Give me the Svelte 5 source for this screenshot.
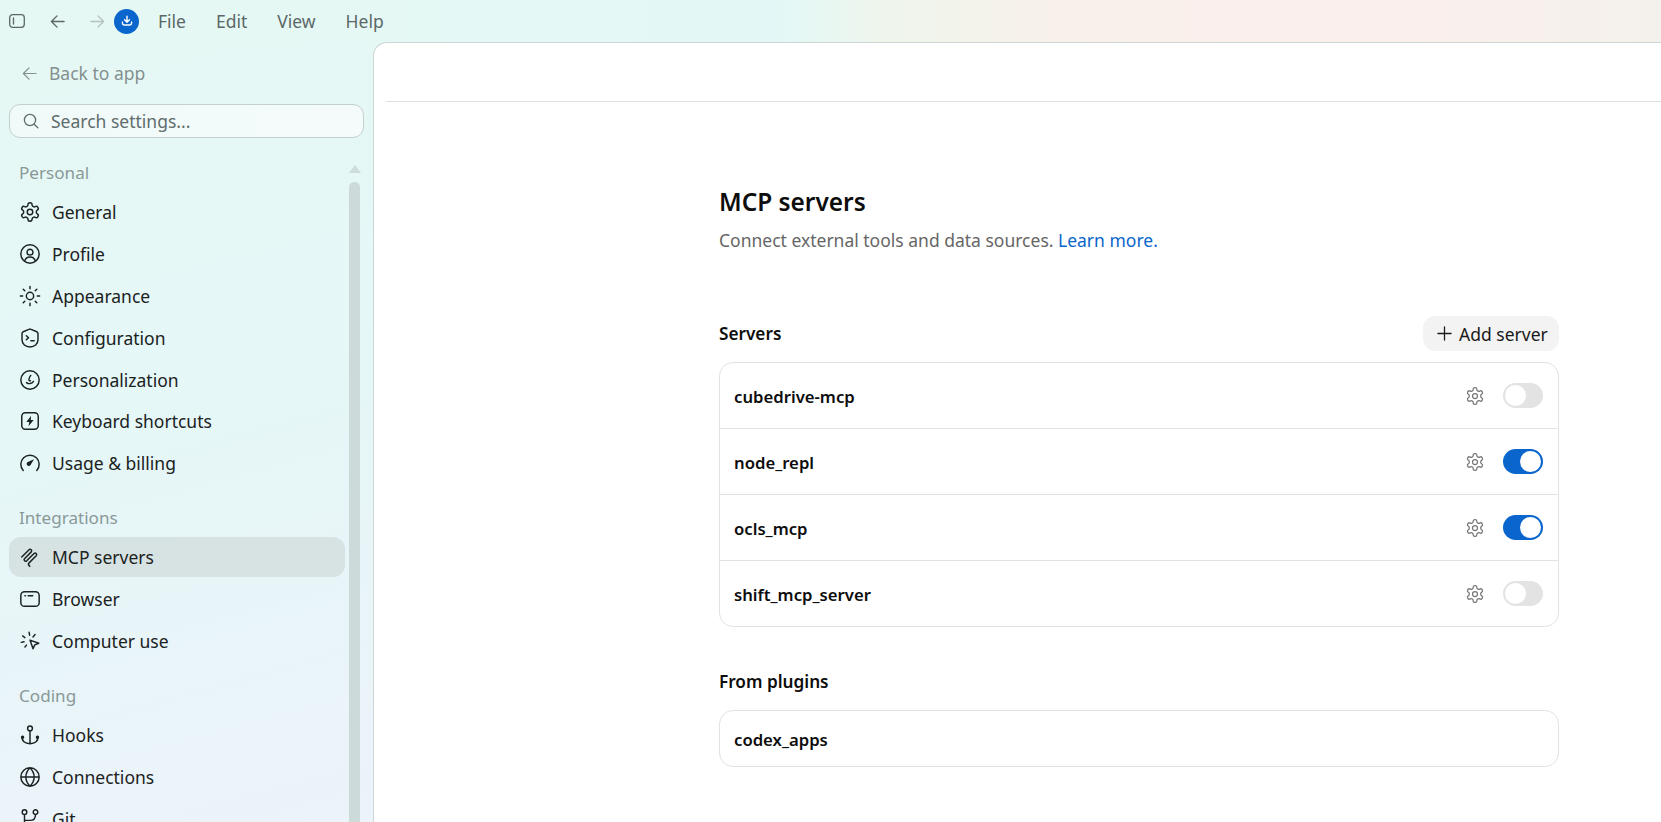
<script lang="ts">
  const gear =
    'M12.22 2h-.44a2 2 0 0 0-2 2v.18a2 2 0 0 1-1 1.73l-.43.25a2 2 0 0 1-2 0l-.15-.08a2 2 0 0 0-2.73.73l-.22.38a2 2 0 0 0 .73 2.73l.15.1a2 2 0 0 1 1 1.72v.51a2 2 0 0 1-1 1.74l-.15.09a2 2 0 0 0-.73 2.73l.22.38a2 2 0 0 0 2.73.73l.15-.08a2 2 0 0 1 2 0l.43.25a2 2 0 0 1 1 1.73V20a2 2 0 0 0 2 2h.44a2 2 0 0 0 2-2v-.18a2 2 0 0 1 1-1.73l.43-.25a2 2 0 0 1 2 0l.15.08a2 2 0 0 0 2.73-.73l.22-.39a2 2 0 0 0-.73-2.73l-.15-.08a2 2 0 0 1-1-1.74v-.5a2 2 0 0 1 1-1.74l.15-.09a2 2 0 0 0 .73-2.73l-.22-.38a2 2 0 0 0-2.73-.73l-.15.08a2 2 0 0 1-2 0l-.43-.25a2 2 0 0 1-1-1.73V4a2 2 0 0 0-2-2zM9 12a3 3 0 1 0 6 0a3 3 0 1 0-6 0';

  // stroke paths, then optional filled paths
  const icons: Record<string, { d: string; fill?: string }> = {
    general: { d: gear },
    profile: { d: 'M2 12a10 10 0 1 0 20 0a10 10 0 1 0-20 0M8.8 10a3.2 3.2 0 1 0 6.4 0a3.2 3.2 0 1 0-6.4 0M6.2 19.4c1-2.9 3.2-4.2 5.8-4.2s4.8 1.3 5.8 4.2' },
    appearance: { d: 'M8 12a4 4 0 1 0 8 0a4 4 0 1 0-8 0M12 1.5v2.5M12 20v2.5M1.5 12H4M20 12h2.5M4.6 4.6l1.7 1.7M17.7 17.7l1.7 1.7M4.6 19.4l1.7-1.7M17.7 6.3l1.7-1.7' },
    configuration: { d: 'M10.8 2.6 4.6 5.2a2 2 0 0 0-1.3 1.9V14c0 4.6 3.8 7.7 8.7 7.7s8.7-3.1 8.7-7.7V7.1a2 2 0 0 0-1.3-1.9l-6.2-2.6a2.6 2.6 0 0 0-2.4 0zM8 9.5l2.4 2.2L8 14M13 15h3.6' },
    personalization: { d: 'M2 12a10 10 0 1 0 20 0a10 10 0 1 0-20 0M12.8 7c-1.2 1.6-2 3.2-2 4.6 0 .9.7 1.3 1.6 1.2M8.2 14.8c2.2 1.8 5.8 1.5 7.6-1.2' },
    keyboard: { d: 'M7 3h10a4 4 0 0 1 4 4v10a4 4 0 0 1-4 4H7a4 4 0 0 1-4-4V7a4 4 0 0 1 4-4z', fill: 'M13.2 6.4 8 13.2h3.2l-.8 4.4 5.6-6.8h-3.2z' },
    usage: { d: 'M4.6 20.2a10 10 0 1 1 14.8 0', fill: 'M16.4 7.8 9.6 10.9a2.3 2.3 0 1 0 3 3.3z' },
    mcp: { d: 'M3 12 11 4a1.7 1.7 0 0 1 2.4 2.4L6 13.8a1.7 1.7 0 0 0 2.4 2.4L16.4 8.2a1.7 1.7 0 0 1 2.4 2.4L11 18.4c-1 1-1 2 0 3l.8.8' },
    browser: { d: 'M6 4h12a4 4 0 0 1 4 4v8a4 4 0 0 1-4 4H6a4 4 0 0 1-4-4V8a4 4 0 0 1 4-4zM6.5 8.5h.6M10 8.5h5' },
    computer: { d: 'M11 2.5l.6 3.2M4 6.5l2.4 1.8M2.5 13.5l3-.6M6.5 18.5l1.6-2M17.5 5l-2.2 2.6M12 11l9.5 3.4-4.3 1.8-1.9 4.3z' },
    hooks: {
      d: 'M9.4 4.8a2.6 2.6 0 1 0 5.2 0a2.6 2.6 0 1 0-5.2 0M12 7.4v14M3.6 13.5c-1 5 3 8 8.4 8s9.4-3 8.4-8',
      fill: 'M2 14.5a1.9 1.9 0 1 0 3.8 0a1.9 1.9 0 1 0-3.8 0M18.2 14.5a1.9 1.9 0 1 0 3.8 0a1.9 1.9 0 1 0-3.8 0'
    },
    connections: { d: 'M2 12a10 10 0 1 0 20 0a10 10 0 1 0-20 0M2 12h20M12 2c-6 6-6 14 0 20c6-6 6-14 0-20' },
    git: { d: 'M3.5 4.5a2.5 2.5 0 1 0 5 0a2.5 2.5 0 1 0-5 0M15.5 4.5a2.5 2.5 0 1 0 5 0a2.5 2.5 0 1 0-5 0M3.5 20.5a2.5 2.5 0 1 0 5 0a2.5 2.5 0 1 0-5 0M6 7v11M18 7c0 5-3 6.5-6 6.5H6' }
  };

  const groups = [
    {
      label: 'Personal',
      items: [
        ['general', 'General'],
        ['profile', 'Profile'],
        ['appearance', 'Appearance'],
        ['configuration', 'Configuration'],
        ['personalization', 'Personalization'],
        ['keyboard', 'Keyboard shortcuts'],
        ['usage', 'Usage & billing']
      ]
    },
    {
      label: 'Integrations',
      items: [
        ['mcp', 'MCP servers'],
        ['browser', 'Browser'],
        ['computer', 'Computer use']
      ]
    },
    {
      label: 'Coding',
      items: [
        ['hooks', 'Hooks'],
        ['connections', 'Connections'],
        ['git', 'Git']
      ]
    }
  ];

  let servers = $state([
    { name: 'cubedrive-mcp', on: false },
    { name: 'node_repl', on: true },
    { name: 'ocls_mcp', on: true },
    { name: 'shift_mcp_server', on: false }
  ]);
</script>

{#snippet icon(name: string)}
  <svg class="nav__icon" viewBox="0 0 24 24" aria-hidden="true">
    <path d={icons[name].d} />
    {#if icons[name].fill}
      <path class="solid" d={icons[name].fill} />
    {/if}
  </svg>
{/snippet}

<div class="app">
  <header class="titlebar">
    <svg class="tb-side" viewBox="0 0 16 14" aria-hidden="true">
      <rect x="0.7" y="0.7" width="14.6" height="12.6" rx="3" />
      <path d="M4.5 4v6" />
    </svg>
    <svg class="tb-arrow" viewBox="0 0 16 16" aria-hidden="true">
      <path d="M15 8H1.5M7.5 2 1.5 8l6 6" />
    </svg>
    <svg class="tb-arrow tb-arrow--off" viewBox="0 0 16 16" aria-hidden="true">
      <path d="M1 8h13.5M8.5 2l6 6-6 6" />
    </svg>
    <span class="tb-update">
      <svg viewBox="0 0 16 16" aria-hidden="true">
        <path d="M8 2.5v6.5M5.2 6.6 8 9.3l2.8-2.7M2.8 9v1.6a2 2 0 0 0 2 2h6.4a2 2 0 0 0 2-2V9" />
      </svg>
    </span>
    <nav class="menu">
      <span>File</span>
      <span>Edit</span>
      <span>View</span>
      <span>Help</span>
    </nav>
  </header>

  <div class="body">
    <aside class="sidebar">
      <div class="sidebar__scroll">
        <div class="back">
          <svg viewBox="0 0 16 16" aria-hidden="true">
            <path d="M15 8H1.5M7.5 2 1.5 8l6 6" />
          </svg>
          Back to app
        </div>

        <div class="search">
          <svg viewBox="0 0 16 16" aria-hidden="true">
            <circle cx="7" cy="7" r="5.6" />
            <path d="m11.2 11.2 3.6 3.6" />
          </svg>
          Search settings...
        </div>

        <div class="nav">
          {#each groups as group}
            <h2 class="nav__label">{group.label}</h2>
            <ul class="nav__list">
              {#each group.items as [name, label]}
                <li class="nav__item" class:nav__item--active={name === 'mcp'}>
                  {@render icon(name)}
                  {label}
                </li>
              {/each}
            </ul>
          {/each}
        </div>
      </div>

      <div class="scrollbar">
        <span class="scrollbar__arrow"></span>
        <span class="scrollbar__thumb"></span>
      </div>
    </aside>

    <main class="panel">
      <div class="panel__head"></div>
      <section class="page">
        <h1 class="page__title">MCP servers</h1>
        <p class="page__sub">
          Connect external tools and data sources. <span class="link">Learn more.</span>
        </p>

        <div class="section-head">
          <h2>Servers</h2>
          <button type="button" class="add">
            <svg viewBox="0 0 16 16" aria-hidden="true"><path d="M8 1v14M1 8h14" /></svg>
            Add server
          </button>
        </div>

        <div class="card">
          {#each servers as server}
            <div class="row">
              <span class="row__name">{server.name}</span>
              <svg class="row__gear" viewBox="0 0 24 24" aria-hidden="true"><path d={gear} /></svg>
              <button
                type="button"
                class="toggle"
                class:toggle--on={server.on}
                aria-label={server.name}
                onclick={() => (server.on = !server.on)}
              ></button>
            </div>
          {/each}
        </div>

        <h2 class="plugins">From plugins</h2>
        <div class="card">
          <div class="row row--plugin">
            <span class="row__name">codex_apps</span>
          </div>
        </div>
      </section>
    </main>
  </div>
</div>

<style>
  :global(body) {
    margin: 0;
    overflow: hidden;
  }

  .app {
    display: flex;
    flex-direction: column;
    height: 100vh;
    overflow: hidden;
    font-family: 'Noto Sans', 'Open Sans', sans-serif;
    font-size: 17.5px;
    background: #e6f8f4;
  }

  svg {
    fill: none;
    stroke: currentColor;
    stroke-linecap: round;
    stroke-linejoin: round;
    flex: none;
  }

  .titlebar {
    display: flex;
    align-items: center;
    flex: none;
    height: 42px;
    box-sizing: border-box;
    padding-left: 9px;
    color: #5c6868;
    background: linear-gradient(
      to right,
      #e6f8f3 0,
      #e3f8f6 780px,
      #eff5ec 890px,
      #f8f1e9 1060px,
      #faefec 1220px,
      #faefed 1420px,
      #f4f1ec 1661px
    );
  }

  .tb-side {
    width: 16px;
    height: 14px;
    stroke-width: 1.3;
  }

  .tb-arrow {
    width: 15px;
    height: 15px;
    margin-left: 25px;
    stroke-width: 1.5;
  }

  .tb-arrow--off {
    color: #b3c2c0;
  }

  .tb-update {
    display: flex;
    align-items: center;
    justify-content: center;
    width: 25px;
    height: 25px;
    margin-left: 9px;
    border-radius: 50%;
    background: #0a66cc;
    color: #fff;
  }

  .tb-update svg {
    width: 14px;
    height: 14px;
    stroke-width: 1.6;
  }

  .menu {
    display: flex;
    gap: 30px;
    margin-left: 19px;
  }

  .body {
    display: flex;
    flex: 1;
    min-height: 0;
  }

  .sidebar {
    display: flex;
    flex: none;
    width: 373px;
    overflow: hidden;
    background: linear-gradient(165deg, #e6f8f4 0, #e5f7f7 45%, #ecf3fa 100%);
  }

  .sidebar__scroll {
    width: 355px;
    flex: none;
    box-sizing: border-box;
    padding-left: 9px;
  }

  .back {
    display: flex;
    align-items: center;
    gap: 12px;
    height: 40px;
    margin: 11px 0;
    padding-left: 13px;
    color: #83908f;
  }

  .back svg {
    width: 15px;
    height: 15px;
    stroke-width: 1.3;
  }

  .search {
    display: flex;
    align-items: center;
    gap: 12px;
    width: 355px;
    height: 34px;
    box-sizing: border-box;
    padding-left: 13px;
    border: 1px solid #c3d0d0;
    border-radius: 11px;
    background: linear-gradient(to right, #f0faf9, #f5fbfb);
    color: #5f6c6c;
  }

  .search svg {
    width: 16px;
    height: 16px;
    stroke-width: 1.3;
  }

  .nav {
    width: 336px;
  }

  .nav__label {
    height: 24px;
    margin: 23px 0 7px;
    padding-left: 10px;
    font-size: 17.1px;
    font-weight: 400;
    line-height: 24px;
    color: #8a9998;
  }

  .nav__list {
    display: flex;
    flex-direction: column;
    gap: 1.9px;
    margin: 0;
    padding: 0;
    list-style: none;
  }

  .nav__item {
    display: flex;
    align-items: center;
    gap: 11px;
    height: 40px;
    padding-left: 10px;
    border-radius: 12px;
    color: #1b2222;
  }

  .nav__item--active {
    background: #d7e2e3;
  }

  .nav__icon {
    width: 22px;
    height: 22px;
    stroke-width: 1.6;
  }

  .nav__icon .solid {
    fill: currentColor;
    stroke: none;
  }

  .scrollbar {
    display: flex;
    flex-direction: column;
    align-items: center;
    width: 11px;
    margin-left: -6px;
    padding-top: 123px;
  }

  .scrollbar__arrow {
    width: 0;
    height: 0;
    border: 6px solid transparent;
    border-top: 0;
    border-bottom: 8px solid #cddcdc;
  }

  .scrollbar__thumb {
    flex: 1;
    width: 11px;
    margin-top: 9px;
    border-radius: 5px 5px 0 0;
    background: #ccdada;
  }

  .panel {
    flex: 1;
    min-width: 0;
    box-sizing: border-box;
    border-top: 1px solid #ccd6d5;
    border-left: 1px solid #ccd6d5;
    border-top-left-radius: 14px;
    background: #fff;
  }

  .panel__head {
    height: 58px;
    margin-left: 12px;
    border-bottom: 1px solid #e0e0e0;
  }

  .page {
    width: 840px;
    margin-left: 345px;
    color: #0d0d0d;
  }

  .page__title {
    height: 30px;
    margin: 0;
    padding-top: 85px;
    font-size: 24.4px;
    font-weight: 600;
    line-height: 30px;
  }

  .page__sub {
    height: 24px;
    margin: 11px 0 0;
    line-height: 24px;
    color: #666;
  }

  .link {
    color: #0a66cc;
  }

  .section-head {
    display: flex;
    align-items: center;
    justify-content: space-between;
    height: 35px;
    margin: 64px 0 11px;
  }

  .section-head h2,
  .plugins {
    margin: 0;
    font-size: 17.2px;
    font-weight: 600;
    line-height: 24px;
  }

  .add {
    display: flex;
    align-items: center;
    gap: 7px;
    width: 136px;
    height: 35px;
    padding: 0 0 0 14px;
    border: 0;
    border-radius: 12px;
    background: #f3f3f3;
    color: #1a1a1a;
    font: inherit;
  }

  .add svg {
    width: 15px;
    height: 15px;
    stroke-width: 1.4;
  }

  .card {
    border: 1px solid #e2e2e2;
    border-radius: 14px;
  }

  .row {
    display: flex;
    align-items: center;
    height: 65px;
    padding: 0 15px 0 14px;
  }

  .row + .row {
    border-top: 1px solid #e2e2e2;
  }

  .row--plugin {
    height: 55px;
  }

  .row__name {
    flex: 1;
    padding-top: 1px;
    font-size: 16.7px;
    font-weight: 600;
  }

  .row__gear {
    width: 20px;
    height: 20px;
    margin-right: 18px;
    color: #777;
    stroke-width: 1.5;
  }

  .toggle {
    position: relative;
    flex: none;
    width: 40px;
    height: 25px;
    padding: 0;
    border: 0;
    border-radius: 13px;
    background: #e3e3e3;
  }

  .toggle::after {
    content: '';
    position: absolute;
    top: 2px;
    left: 2px;
    width: 21px;
    height: 21px;
    border-radius: 50%;
    background: #fff;
  }

  .toggle--on {
    background: #0a66cc;
  }

  .toggle--on::after {
    left: 17px;
  }

  .plugins {
    margin: 43px 0 16px;
  }
</style>
